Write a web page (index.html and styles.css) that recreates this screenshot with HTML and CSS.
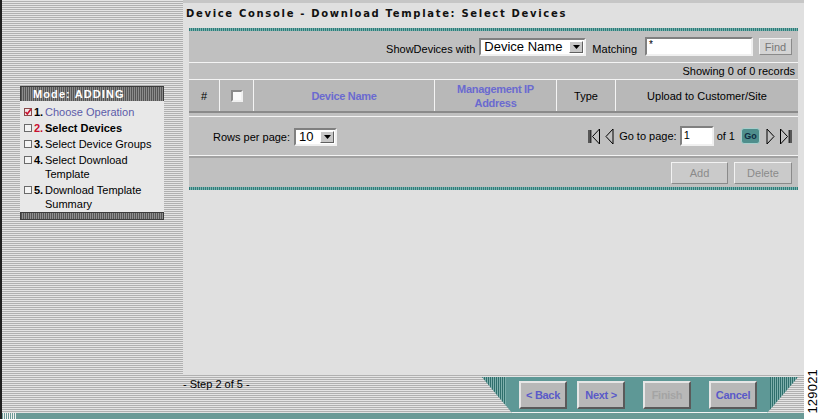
FILE: index.html
```html
<!DOCTYPE html>
<html>
<head>
<meta charset="utf-8">
<link rel="stylesheet" href="styles.css">
</head>
<body>
<div class="screen">
  <div class="frame">
    <div class="upper">
      <aside class="sidebar">
        <div class="modebox">
          <div class="modehead">Mode: ADDING</div>
          <ul class="steps">
            <li class="done"><span class="cb checked"><svg width="8" height="8" viewBox="0 0 8 8"><path d="M1.5 4 L3.3 6 L6.8 1.3" fill="none" stroke="#c8102e" stroke-width="1.6"/></svg></span><b class="num">1.</b><span class="lbl">Choose Operation</span></li>
            <li class="current"><span class="cb"></span><b class="num">2.</b><span class="lbl">Select Devices</span></li>
            <li><span class="cb"></span><b class="num">3.</b><span class="lbl">Select Device Groups</span></li>
            <li><span class="cb"></span><b class="num">4.</b><span class="lbl">Select Download Template</span></li>
            <li><span class="cb"></span><b class="num">5.</b><span class="lbl">Download Template Summary</span></li>
          </ul>
          <div class="modefoot"></div>
        </div>
      </aside>
      <main class="main">
        <h1 class="title">Device Console - Download Template: Select Devices</h1>
        <section class="panel">
          <div class="tealline"></div>
          <div class="filter">
            <span class="lab">ShowDevices with</span>
            <span class="select wide"><span class="val">Device Name</span><span class="arrow"><svg width="7" height="4" viewBox="0 0 7 4"><path d="M0 0 H7 L3.5 4 Z" fill="#000"/></svg></span></span>
            <span class="lab">Matching</span>
            <span class="input wide">*</span>
            <span class="btn find">Find</span>
          </div>
          <div class="records">Showing 0 of 0 records</div>
          <div class="thead">
            <div class="th">#</div>
            <div class="th"><span class="hcheck"></span></div>
            <div class="th link">Device Name</div>
            <div class="th link">Management IP<br>Address</div>
            <div class="th">Type</div>
            <div class="th">Upload to Customer/Site</div>
          </div>
          <div class="pager">
            <div class="rows">
              <span class="lab">Rows per page:</span>
              <span class="select small"><span class="val">10</span><span class="arrow"><svg width="7" height="4" viewBox="0 0 7 4"><path d="M0 0 H7 L3.5 4 Z" fill="#000"/></svg></span></span>
            </div>
            <div class="nav">
              <svg class="ico" width="12" height="17" viewBox="0 0 12 17"><path d="M1 2 V15 M2.8 2 V15" stroke="#000" stroke-width="1.1"/><path d="M11.5 1 L4.5 8.5 L11.5 16 Z" fill="none" stroke="#000" stroke-width="1"/></svg>
              <svg class="ico" width="9" height="17" viewBox="0 0 9 17"><path d="M8 1 L1 8.5 L8 16 Z" fill="none" stroke="#000" stroke-width="1"/></svg>
              <span class="lab">Go to page:</span>
              <span class="input page">1</span>
              <span class="lab">of 1</span>
              <span class="go">Go</span>
              <svg class="ico" width="9" height="17" viewBox="0 0 9 17"><path d="M1 1 L8 8.5 L1 16 Z" fill="none" stroke="#000" stroke-width="1"/></svg>
              <svg class="ico last" width="12" height="17" viewBox="0 0 12 17"><path d="M0.5 1 L7.5 8.5 L0.5 16 Z" fill="none" stroke="#000" stroke-width="1"/><path d="M9.2 2 V15 M11 2 V15" stroke="#000" stroke-width="1.1"/></svg>
            </div>
          </div>
          <div class="actions">
            <span class="btn dis add">Add</span>
            <span class="btn dis del">Delete</span>
          </div>
          <div class="tealline"></div>
        </section>
      </main>
    </div>
    <div class="lower">
      <div class="step">- Step 2 of 5 -</div>
      <div class="wizard">
        <span class="wbtn">&lt; Back</span>
        <span class="wbtn">Next &gt;</span>
        <span class="wbtn off">Finish</span>
        <span class="wbtn">Cancel</span>
      </div>
    </div>
    <div class="foot"><span class="footgrip"></span></div>
  </div>
  <div class="sideid"><span>129021</span></div>
</div>
</body>
</html>
```

FILE: styles.css
```css
html, body {
  margin: 0;
  padding: 0;
  background: #fff;
}
body {
  font-family: "Liberation Sans", Arial, sans-serif;
  font-size: 11px;
  color: #000;
}
.screen {
  width: 820px;
  height: 419px;
  display: flex;
  overflow: hidden;
}
.frame {
  width: 804px;
  height: 419px;
  box-sizing: border-box;
  border-left: 2px solid #1e1e1e;
  display: flex;
  flex-direction: column;
  background: repeating-linear-gradient(to bottom, #e4e4e4 0 1px, #b0b0b0 1px 2px);
}
.upper {
  display: flex;
  height: 375px;
}
.sidebar {
  width: 181px;
  box-sizing: border-box;
  padding: 86px 0 0 18px;
}
.modebox {
  width: 144px;
  background: #e8e8e8;
}
.modehead {
  height: 15px;
  line-height: 15px;
  box-sizing: border-box;
  padding-left: 12px;
  color: #fff;
  font-weight: bold;
  font-size: 11px;
  letter-spacing: 1.1px;
  background: repeating-linear-gradient(to right, #555 0 1px, #8c8c8c 1px 2px);
  border: 1px solid #3c3c3c;
  border-bottom: 0;
}
.steps {
  list-style: none;
  margin: 0;
  padding: 4px 0 1px 4px;
}
.steps li {
  display: grid;
  grid-template-columns: 10px 11px 1fr;
  line-height: 14px;
  margin-bottom: 2px;
  color: #000;
}
.steps li:last-child { margin-bottom: 0; }
.cb {
  width: 8px;
  height: 8px;
  margin-top: 3px;
  box-sizing: border-box;
  border: 1px solid #6a6a6a;
  background: #f4f4f4;
  display: block;
}
.cb svg { display: block; margin: -1px 0 0 -1px; }
.cb.checked { border-color: #8a4a4a; background: #f0e8e8; }
.num { font-weight: bold; font-size: 11px; }
.done .lbl { color: #5c5ca8; }
.current .num { color: #c8102e; }
.current .lbl { font-weight: bold; }
.modefoot {
  height: 8px;
  background: repeating-linear-gradient(to right, #555 0 1px, #909090 1px 2px);
  border: 1px solid #3c3c3c;
  box-sizing: border-box;
}

.main {
  width: 621px;
  background: #e0e0e0;
  border-top: 3px solid #c6c6c6;
  box-sizing: border-box;
}
.title {
  margin: 0;
  padding: 4px 0 0 3px;
  height: 13px;
  line-height: 13px;
  font-weight: bold;
  letter-spacing: 1.68px;
  color: #111;
  font-family: "DejaVu Sans", Verdana, sans-serif;
  font-size: 10px;
}
.panel {
  margin: 8px 0 0 6px;
  width: 609px;
  background: #c0c0c0;
}
.tealline {
  height: 3px;
  background: repeating-linear-gradient(to right, #2f7c79 0 1px, #79b1ae 1px 2px);
}
.filter {
  height: 31px;
  display: flex;
  align-items: center;
  justify-content: flex-end;
  padding-right: 6px;
  border-bottom: 1px solid #f4f4f4;
}
.filter .lab { margin-right: 4px; padding-top: 4px; }
.filter .select { margin-right: 6px; }
.filter .input { margin-right: 6px; margin-left: 4px; }
.select {
  height: 18px;
  box-sizing: border-box;
  display: inline-flex;
  align-items: center;
  background: #fff;
  border: 2px solid;
  border-color: #808080 #f0f0f0 #f0f0f0 #808080;
  font-size: 13px;
  padding-left: 3px;
}
.select .val { flex: 1; line-height: 14px; }
.select .arrow {
  width: 14px;
  height: 12px;
  margin-right: 1px;
  display: flex;
  align-items: center;
  justify-content: center;
  background: #c8c8c8;
  box-sizing: border-box;
  border: 1px solid;
  border-color: #fff #606060 #606060 #fff;
}
.select.wide { width: 107px; }
.select.small { width: 43px; }
.input {
  height: 19px;
  box-sizing: border-box;
  background: #fff;
  border: 2px solid;
  border-color: #808080 #f0f0f0 #f0f0f0 #808080;
  font-size: 10px;
  line-height: 12px;
  padding-left: 2px;
  display: inline-block;
}
.input.wide { width: 108px; }
.input.page { width: 34px; height: 20px; font-size: 11px; line-height: 14px; }
.btn {
  display: inline-flex;
  align-items: center;
  justify-content: center;
  box-sizing: border-box;
  background: #d4d4d4;
  border: 1px solid;
  border-color: #f2f2f2 #8a8a8a #8a8a8a #f2f2f2;
  color: #7a7a7a;
  font-size: 11px;
}
.find { width: 33px; height: 17px; color: #777; }
.records {
  height: 16px;
  line-height: 16px;
  text-align: right;
  padding-right: 3px;
  border-bottom: 1px solid #f4f4f4;
}
.thead {
  display: grid;
  grid-template-columns: 30px 34px 181px 122px 59px 183px;
  height: 33px;
  background: #b8b8b8;
  border-bottom: 2px solid #8a8a8a;
  box-sizing: border-box;
}
.th {
  display: flex;
  align-items: center;
  justify-content: center;
  text-align: center;
  border-left: 1px solid #f4f4f4;
  line-height: 14px;
}
.th:first-child { border-left: 0; }
.th.link {
  color: #6a6ad0;
  font-weight: bold;
  letter-spacing: -0.3px;
}
.hcheck {
  width: 12px;
  height: 12px;
  box-sizing: border-box;
  background: #fafafa;
  border: 2px solid;
  border-color: #8a8a8a #f0f0f0 #f0f0f0 #8a8a8a;
}
.pager {
  margin-top: 3px;
  height: 40px;
  box-sizing: border-box;
  border-top: 1px solid #f4f4f4;
  border-bottom: 1px solid #f4f4f4;
  display: flex;
  align-items: center;
  justify-content: space-between;
  padding: 0 6px 0 24px;
}
.rows { display: flex; align-items: center; gap: 4px; padding-top: 2px; }
.nav { display: flex; align-items: center; }
.nav .ico { display: block; margin-right: 5px; }
.nav .ico.last { margin-right: 0; }
.nav .lab { margin-right: 3px; }
.nav .input.page { margin-right: 3px; }
.go {
  width: 19px;
  height: 16px;
  margin: 0 6px 0 3px;
  box-sizing: border-box;
  border-radius: 3px;
  background: #4f8e8c;
  border: 1px solid #a7cfcc;
  color: #0e2a40;
  font-size: 9px;
  font-weight: bold;
  display: flex;
  align-items: center;
  justify-content: center;
}
.actions {
  border-top: 2px solid #a2a2a2;
  height: 31px;
  box-sizing: border-box;
  display: flex;
  align-items: center;
  justify-content: flex-end;
  gap: 6px;
  padding-right: 6px;
}
.btn.dis { height: 22px; color: #8a8a8a; background: #cacaca; }
.add { width: 57px; }
.del { width: 58px; }

.lower {
  height: 38px;
  display: flex;
}
.step {
  padding: 3px 0 0 181px;
  line-height: 13px;
  font-size: 11px;
}
.wizard {
  margin: 2px 6px 0 auto;
  width: 316px;
  height: 36px;
  box-sizing: border-box;
  clip-path: polygon(0 0, 316px 0, 285px 36px, 30px 36px);
  background:
    linear-gradient(#f4f4f4, #f4f4f4) 0 35px / 100% 1px no-repeat,
    repeating-linear-gradient(to right, #2f6f6c 0 1px, #7fb0ad 1px 2px) 0 0 / 24px 100% no-repeat,
    repeating-linear-gradient(to right, #2f6f6c 0 1px, #7fb0ad 1px 2px) right 0 top 0 / 28px 100% no-repeat,
    #5e9896;
  display: flex;
  padding: 4px 0 0 37px;
}
.wbtn {
  width: 48px;
  height: 28px;
  box-sizing: border-box;
  background: #b8b8b8;
  border: 2px solid;
  border-color: #e6e6e6 #5a5a5a #5a5a5a #e6e6e6;
  color: #5a5ac8;
  font-weight: bold;
  font-size: 11px;
  display: flex;
  align-items: center;
  justify-content: center;
  letter-spacing: -0.3px;
}
.wbtn + .wbtn { margin-left: 18px; }
.wbtn:nth-child(2) { margin-left: 10px; }
.wbtn.off { color: #a4a4a4; }
.foot {
  height: 6px;
  background: #6a9a96;
  display: flex;
}
.footgrip {
  width: 13px;
  margin-left: 1px;
  background: repeating-linear-gradient(to right, #f0f0f0 0 1px, #6a9a96 1px 2px);
}
.sideid {
  width: 16px;
  display: flex;
  align-items: flex-end;
  justify-content: center;
  padding-bottom: 5px;
  box-sizing: border-box;
}
.sideid span {
  writing-mode: vertical-rl;
  transform: rotate(180deg);
  font-size: 13px;
  line-height: 13px;
  letter-spacing: 0.2px;
}
```
